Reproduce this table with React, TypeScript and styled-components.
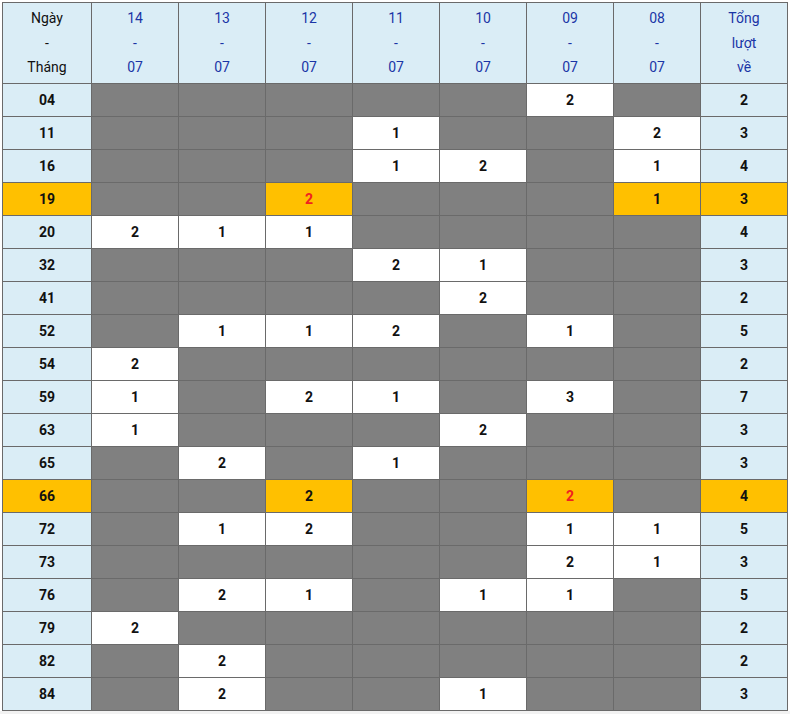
import React from 'react'
import styled, { createGlobalStyle } from 'styled-components'

type Cell = { v?: number; red?: boolean }

interface RowData {
  num: string
  hot?: boolean
  cells: Cell[]
  total: number
}

const dates = ['14', '13', '12', '11', '10', '09', '08']

const c = (v?: number, red?: boolean): Cell => ({ v, red })
const e = c()

const rows: RowData[] = [
  { num: '04', cells: [e, e, e, e, e, c(2), e], total: 2 },
  { num: '11', cells: [e, e, e, c(1), e, e, c(2)], total: 3 },
  { num: '16', cells: [e, e, e, c(1), c(2), e, c(1)], total: 4 },
  { num: '19', hot: true, cells: [e, e, c(2, true), e, e, e, c(1)], total: 3 },
  { num: '20', cells: [c(2), c(1), c(1), e, e, e, e], total: 4 },
  { num: '32', cells: [e, e, e, c(2), c(1), e, e], total: 3 },
  { num: '41', cells: [e, e, e, e, c(2), e, e], total: 2 },
  { num: '52', cells: [e, c(1), c(1), c(2), e, c(1), e], total: 5 },
  { num: '54', cells: [c(2), e, e, e, e, e, e], total: 2 },
  { num: '59', cells: [c(1), e, c(2), c(1), e, c(3), e], total: 7 },
  { num: '63', cells: [c(1), e, e, e, c(2), e, e], total: 3 },
  { num: '65', cells: [e, c(2), e, c(1), e, e, e], total: 3 },
  { num: '66', hot: true, cells: [e, e, c(2), e, e, c(2, true), e], total: 4 },
  { num: '72', cells: [e, c(1), c(2), e, e, c(1), c(1)], total: 5 },
  { num: '73', cells: [e, e, e, e, e, c(2), c(1)], total: 3 },
  { num: '76', cells: [e, c(2), c(1), e, c(1), c(1), e], total: 5 },
  { num: '79', cells: [c(2), e, e, e, e, e, e], total: 2 },
  { num: '82', cells: [e, c(2), e, e, e, e, e], total: 2 },
  { num: '84', cells: [e, c(2), e, e, c(1), e, e], total: 3 },
]

const GlobalStyle = createGlobalStyle`
  html, body {
    margin: 0;
    background: #f2f2f2;
  }
  body {
    font-family: Roboto, 'Liberation Sans', Arial, sans-serif;
  }
`

const Page = styled.div`
  background: #fff;
  padding: 2px 2px 0 2px;
`

const Table = styled.table`
  border-collapse: collapse;
  table-layout: fixed;
  width: 785px;
  font-size: 14px;
  text-align: center;
`

const HeadCell = styled.th<{ $blue?: boolean }>`
  height: 80px;
  padding: 0;
  border: 1px solid #6a6a6a;
  background: #daedf6;
  font-weight: normal;
  line-height: 24.5px;
  color: ${p => (p.$blue ? '#1a35a6' : '#111')};
`

const NumCell = styled.td<{ $hot?: boolean }>`
  height: 32px;
  padding: 0;
  border: 1px solid #6a6a6a;
  background: ${p => (p.$hot ? '#ffc000' : '#daedf6')};
  font-weight: bold;
  color: #111;
`

const ValueCell = styled.td<{ $state: 'empty' | 'plain' | 'hot'; $red?: boolean }>`
  height: 32px;
  padding: 0;
  border: 1px solid #6a6a6a;
  background: ${p => (p.$state === 'empty' ? '#808080' : p.$state === 'hot' ? '#ffc000' : '#fff')};
  font-weight: bold;
  color: ${p => (p.$red ? '#f02020' : '#111')};
`

const App = () => {
  return (
    <Page>
      <GlobalStyle />
      <Table>
        <colgroup>
          <col style={{ width: 89 }} />
          {dates.map(d => <col key={d} style={{ width: 87 }} />)}
          <col style={{ width: 87 }} />
        </colgroup>
        <thead>
          <tr>
            <HeadCell>Ngày<br />-<br />Tháng</HeadCell>
            {dates.map(d => (
              <HeadCell key={d} $blue>{d}<br />-<br />07</HeadCell>
            ))}
            <HeadCell $blue>Tổng<br />lượt<br />về</HeadCell>
          </tr>
        </thead>
        <tbody>
          {rows.map(r => (
            <tr key={r.num}>
              <NumCell $hot={r.hot}>{r.num}</NumCell>
              {r.cells.map((cell, i) => (
                <ValueCell
                  key={i}
                  $state={cell.v === undefined ? 'empty' : r.hot ? 'hot' : 'plain'}
                  $red={cell.red}
                >
                  {cell.v}
                </ValueCell>
              ))}
              <NumCell $hot={r.hot}>{r.total}</NumCell>
            </tr>
          ))}
        </tbody>
      </Table>
    </Page>
  )
}

export default App
